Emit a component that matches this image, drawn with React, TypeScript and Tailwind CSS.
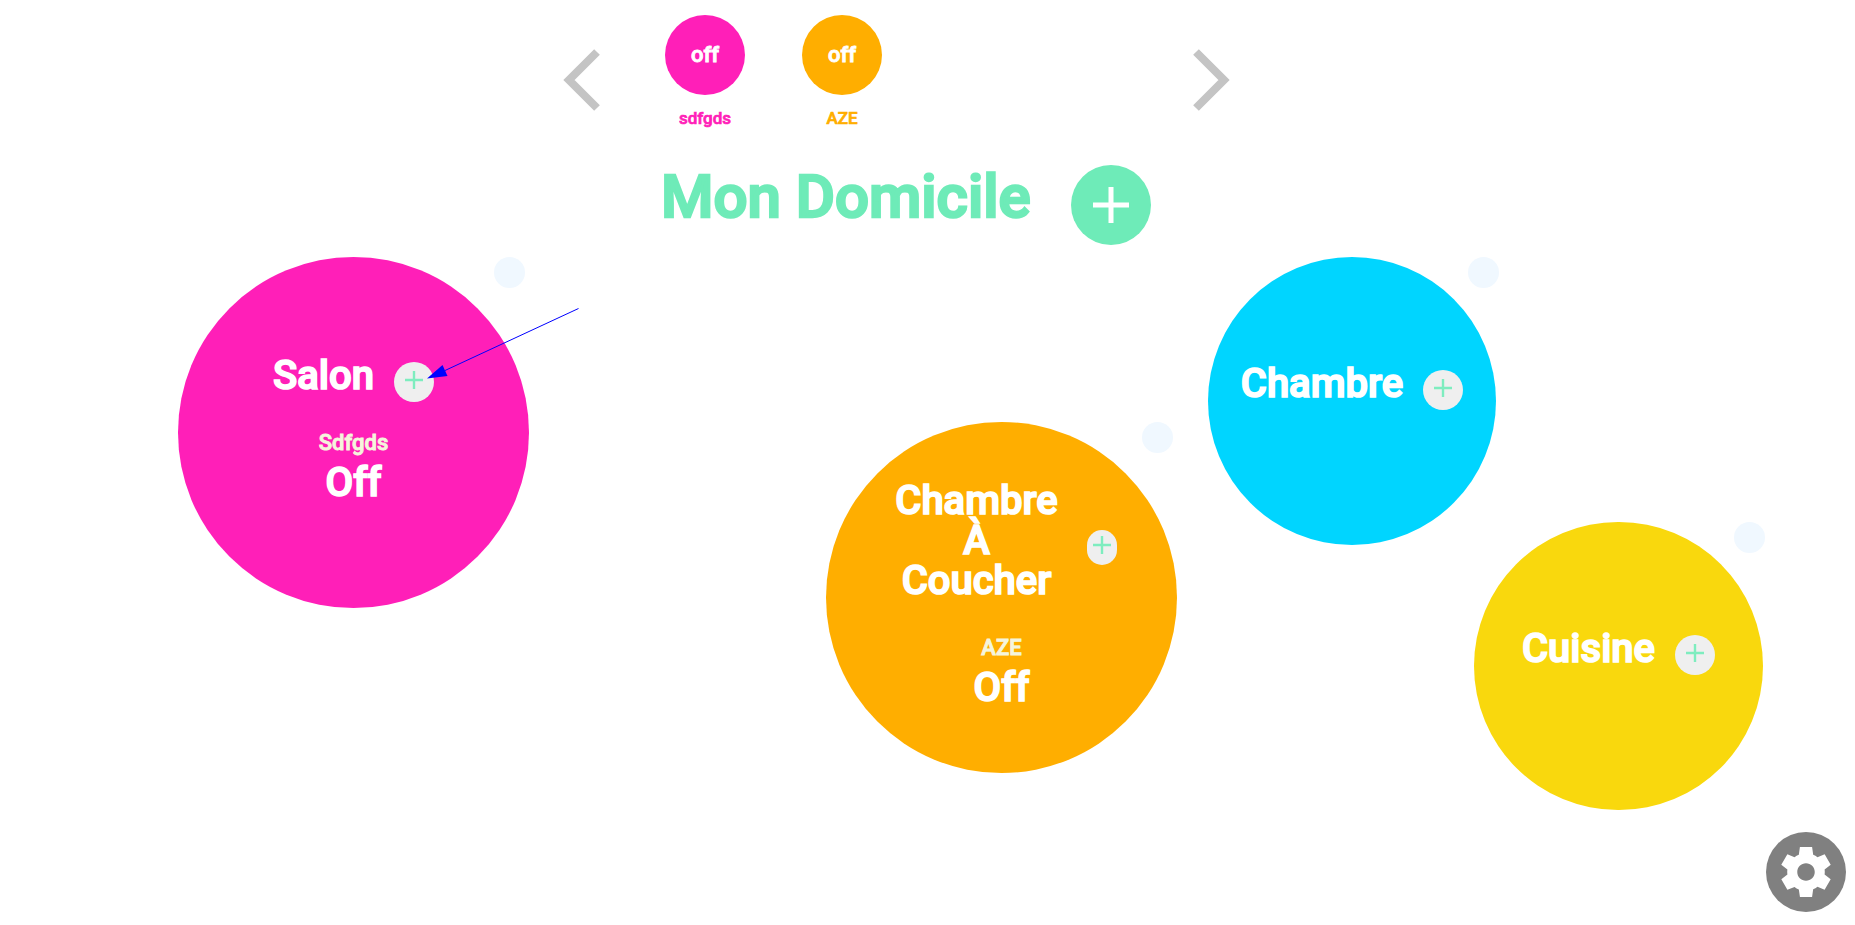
type Room = {
  id: string;
  name: string;
  place: string;
  circle: string;
  title: string;
  add: string;
  handle: string;
  sensor?: string;
  state?: string;
};

// Thickens the medium weight in proportion to the text size.
const heavy = "font-medium [-webkit-text-stroke:calc(1em/24)_currentColor]";

const shortcuts = [
  { name: "sdfgds", state: "off", fill: "bg-[#ff1fb8]", text: "text-[#ff1fb8]" },
  { name: "AZE", state: "off", fill: "bg-[#ffae00]", text: "text-[#ffae00]" },
];

const rooms: Room[] = [
  {
    id: "salon",
    name: "Salon",
    place: "left-[178px] top-[12px]",
    circle: "size-[351px] bg-[#ff1fb8] pt-[99px]",
    title: "",
    add: "size-10",
    handle: "right-1",
    sensor: "Sdfgds",
    state: "Off",
  },
  {
    id: "chambre-a-coucher",
    name: "Chambre À Coucher",
    place: "left-[826px] top-[177px]",
    circle: "size-[351px] bg-[#ffae00] pt-[59px]",
    title: "w-[180px]",
    add: "h-[35px] w-[30px]",
    handle: "right-1",
    sensor: "AZE",
    state: "Off",
  },
  {
    id: "chambre",
    name: "Chambre",
    place: "left-[1208px] top-[12px]",
    circle: "size-[288px] bg-[#00d5ff] pt-[107px]",
    title: "",
    add: "size-10",
    handle: "-right-[3px]",
  },
  {
    id: "cuisine",
    name: "Cuisine",
    place: "left-[1474px] top-[277px]",
    circle: "h-[288px] w-[289px] bg-[#f9d80d] pt-[107px]",
    title: "",
    add: "size-10",
    handle: "-right-0.5",
  },
];

function Chevron({ points }: { points: string }) {
  return (
    <svg viewBox="0 0 38 62" className="h-[62px] w-[38px]" fill="none" stroke="#c4c4c4" strokeWidth="8">
      <polyline points={points} />
    </svg>
  );
}

function RoomBubble({ room }: { room: Room }) {
  return (
    <section className={`absolute ${room.place}`}>
      <div className={`flex flex-col items-center rounded-full text-center text-white ${room.circle}`}>
        <div className="flex items-center justify-center gap-5">
          <h2 className={`mb-1.5 text-[40px] leading-10 ${heavy} ${room.title}`}>{room.name}</h2>
          <button
            type="button"
            aria-label={`Ajouter dans ${room.name}`}
            className={`mt-1.5 flex shrink-0 items-center justify-center rounded-full bg-[#efefef] pb-1 ${room.add}`}
          >
            <svg viewBox="0 0 18 18" className="size-[18px] shrink-0" stroke="#7eedbf" strokeWidth="2.4">
              <path d="M9 0V18M0 9H18" />
            </svg>
          </button>
        </div>
        {room.sensor && (
          <>
            <p className={`mt-[25px] text-[22px] leading-8 text-[#f5f5dc] ${heavy}`}>{room.sensor}</p>
            <p className={`mt-1 text-[40px] leading-10 ${heavy}`}>{room.state}</p>
          </>
        )}
      </div>
      <span className={`absolute top-0 size-[31px] rounded-full bg-[#f0f8ff] ${room.handle}`} />
    </section>
  );
}

export default function App() {
  return (
    <div className="relative flex min-h-screen flex-col overflow-hidden bg-white font-['Roboto',sans-serif]">
      <header className="mx-auto pr-[62px]">
        <nav aria-label="Raccourcis" className="flex w-[667px] pt-[15px]">
          <button type="button" aria-label="Précédent" className="mt-[34px] h-[62px]">
            <Chevron points="34,3 6,31 34,59" />
          </button>
          <ul className="flex flex-1 gap-[57px] pl-16">
            {shortcuts.map((s) => (
              <li key={s.name} className="flex w-20 flex-col items-center gap-[11px]">
                <button
                  type="button"
                  aria-label={`${s.name} ${s.state}`}
                  className={`size-20 rounded-full pb-0.5 text-[22px] text-white ${heavy} ${s.fill}`}
                >
                  {s.state}
                </button>
                <span className={`text-[17px] leading-6 ${heavy} ${s.text}`}>{s.name}</span>
              </li>
            ))}
          </ul>
          <button type="button" aria-label="Suivant" className="mt-[34px] h-[62px]">
            <Chevron points="4,3 32,31 4,59" />
          </button>
        </nav>
        <div className="mt-[35px] flex gap-10 pl-[98px]">
          <h1 className={`text-[60px] leading-[64px] whitespace-nowrap text-[#6eebb8] ${heavy}`}>Mon Domicile</h1>
          <button
            type="button"
            aria-label="Ajouter une pièce"
            className="flex size-20 shrink-0 items-center justify-center rounded-full bg-[#6eebb8]"
          >
            <svg viewBox="0 0 36 36" className="size-9" stroke="#fff" strokeWidth="5">
              <path d="M18 0V36M0 18H36" />
            </svg>
          </button>
        </div>
      </header>

      <main className="relative flex-1">
        {rooms.map((room) => (
          <RoomBubble key={room.id} room={room} />
        ))}
        <svg viewBox="0 0 152 72" className="absolute top-[62px] left-[427px] h-[72px] w-[152px]">
          <path d="M151.500 1.500L18 63.500" stroke="#00f" strokeWidth="1" fill="none" />
          <path d="M0 71.500L15.500 58L20.500 69Z" fill="#00f" />
        </svg>
      </main>

      <button
        type="button"
        aria-label="Paramètres"
        className="absolute right-[9px] bottom-[13px] flex size-20 items-center justify-center rounded-full bg-[#808080]"
      >
        <svg viewBox="0 0 24 24" className="size-[60px] text-white" fill="currentColor">
          <path d="M19.440 12.990c.04-.33.07-.65.07-.99 0-.34-.03-.66-.07-.99l2.450-1.900-2.430-4.220-2.870 1.170c-.52-.4-1.090-.74-1.710-1L14.440 2H9.570l-.44 3.070c-.62.26-1.190.6-1.710 1L4.550 4.890 2.110 9.110l2.450 1.900c-.04.33-.07.65-.07.99 0 .34.03.68.08 1.010l-2.440 1.890 2.430 4.200 2.860-1.150c.53.41 1.100.75 1.710 1.010L9.580 22h4.850l.44-3.070c.62-.26 1.200-.6 1.710-1.010l2.860 1.190 2.430-4.200-2.430-1.920zM12 15.500c-1.930 0-3.500-1.570-3.500-3.500s1.570-3.500 3.500-3.500 3.500 1.570 3.500 3.500-1.570 3.500-3.500 3.500z" />
        </svg>
      </button>
    </div>
  );
}
